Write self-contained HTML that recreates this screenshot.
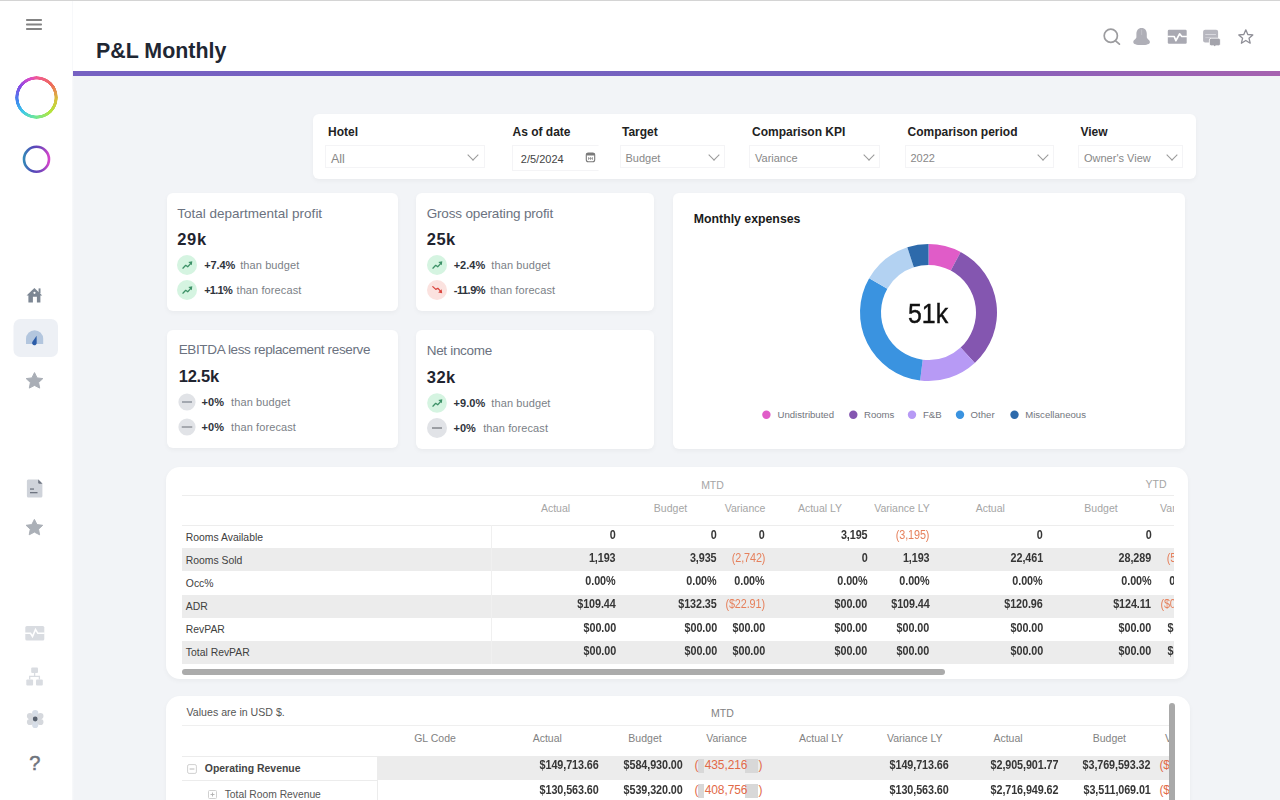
<!DOCTYPE html>
<html><head><meta charset="utf-8">
<style>
*{box-sizing:border-box;margin:0;padding:0}
html,body{width:1280px;height:800px;overflow:hidden;background:#f2f4f7;font-family:"Liberation Sans",sans-serif;color:#222}
.abs{position:absolute}
#topline{position:absolute;left:0;top:0;width:1280px;height:1px;background:#d4d4d4}
#side{position:absolute;left:0;top:1px;width:74px;height:799px;background:linear-gradient(90deg,#fff 71.5px,#f7f8fa 72.5px,#f2f4f7 74px)}
#hdr{position:absolute;left:73px;top:1px;width:1207px;height:70px;background:#fff}
#bar{position:absolute;left:73px;top:71px;width:1207px;height:5px;background:linear-gradient(90deg,#7661c2 0%,#7562bf 60%,#8a61ba 78%,#a662b0 100%)}
.card{position:absolute;background:#fff;border-radius:6px;box-shadow:0 2px 5px rgba(0,0,0,0.04)}
.t{position:absolute;white-space:nowrap;line-height:1}

.fl{font-size:12px;font-weight:bold;color:#222;margin-top:1.5px}
.sel{position:absolute;height:23px;border:1px solid #f4f4f6;background:#fff;margin-top:0.5px}
.sel span{position:absolute;top:7.5px;font-size:11px;color:#888;white-space:nowrap;line-height:1}
.sel i{position:absolute;top:8.5px;width:12px;height:8px}
.sel i:before{content:"";position:absolute;left:2px;top:-3px;width:7px;height:7px;border-right:1.1px solid #999;border-bottom:1.1px solid #999;transform:rotate(45deg)}

.kt{font-size:13.5px;color:#6b7280}
.kv{font-size:16.5px;font-weight:bold;color:#1f2430}
.kp{font-size:11px;font-weight:bold;color:#2e333b;margin-top:1px}
.ks{font-size:11px;color:#7b7f87;letter-spacing:0.1px;margin-top:1px}
.lg{font-size:9.6px;color:#72757d;top:410.37px}

.th1{color:#a5a5a5}
.th2{color:#828282}
#clip1 .nv.red{color:#e6805c}
.tl1{color:#404040}
.nv{font-weight:bold;color:#363636;letter-spacing:-0.1px}
.nv.red{font-weight:normal;color:#e26a48}
#clip1{position:absolute;left:0;top:0;width:1280px;height:800px;clip-path:inset(0 106px 0 0)}
#clip2{position:absolute;left:0;top:0;width:1280px;height:800px;clip-path:inset(0 111px 0 0)}
</style></head><body>
<div id="topline"></div>
<div id="side"></div>
<div id="hdr"></div>
<div id="bar"></div>
<!-- sidebar icons -->
<svg class="abs" style="left:0;top:0" width="72" height="800" viewBox="0 0 72 800">
  <defs>
    <linearGradient id="g2" x1="0" y1="0" x2="1" y2="0">
      <stop offset="0" stop-color="#3486b8"/><stop offset="0.35" stop-color="#5248b8"/><stop offset="0.7" stop-color="#7a46bc"/><stop offset="1" stop-color="#d444cc"/>
    </linearGradient>
  </defs>
  <g fill="#838383">
    <rect x="26" y="19" width="16" height="2" rx="0.8"/>
    <rect x="26" y="23.5" width="16" height="2" rx="0.8"/>
    <rect x="26" y="28" width="16" height="2" rx="0.8"/>
  </g>
  
  <circle cx="36.5" cy="159.3" r="12.5" fill="none" stroke="url(#g2)" stroke-width="2.6"/>
  <!-- home -->
  <g fill="#7d8794">
    <path d="M26.6 295.6 L34.4 288 L42.2 295.6 Z"/>
    <rect x="38.6" y="288.4" width="1.9" height="5"/>
    <path d="M28.4 294.5 H40.4 V302.5 H36.9 V296.8 H32.9 V302.5 H28.4 Z"/>
  </g>
  <circle cx="34.5" cy="292.8" r="1.1" fill="#fff"/>
  <rect x="13.5" y="319" width="44.5" height="38" rx="7" fill="#edf0f5"/>
  <path d="M26 344 V338.8 A8.6 8.6 0 0 1 43.2 338.8 V344 Z" fill="#b3c6de"/>
  <path d="M36.6 335.8 L36.7 342.9 A2.3 2.3 0 1 1 32.3 342 Z" fill="#2b5ca8"/>
  <!-- star -->
  <path d="M34.5 372.6 L37.1 377.9 L42.8 378.6 L38.6 382.5 L39.7 388.1 L34.5 385.4 L29.3 388.1 L30.4 382.5 L26.2 378.6 L31.9 377.9 Z" fill="#a9aeb6" stroke="#a9aeb6" stroke-width="1" stroke-linejoin="round"/>
  <!-- doc -->
  <path d="M28.2 479.5 H38.6 L42.4 483.3 V496 A1.5 1.5 0 0 1 40.9 497.5 H28.4 A1.5 1.5 0 0 1 26.9 496 V481 A1.5 1.5 0 0 1 28.2 479.5 Z" fill="#cfd3da"/>
  <path d="M38.2 479.5 L42.4 483.7 H39.5 A1.3 1.3 0 0 1 38.2 482.4 Z" fill="#6e7480"/>
  <rect x="30" y="488.4" width="4" height="1.3" fill="#6e7480"/>
  <rect x="30" y="492" width="7.5" height="1.3" fill="#6e7480"/>
  <path d="M34.4 519.4 L37 524.6 L42.7 525.3 L38.5 529.2 L39.6 534.8 L34.4 532.1 L29.2 534.8 L30.3 529.2 L26.1 525.3 L31.8 524.6 Z" fill="#abb0b7" stroke="#abb0b7" stroke-width="1" stroke-linejoin="round"/>
  <!-- activity -->
  <rect x="25.3" y="626" width="19" height="14.5" rx="1.5" fill="#d9dce1"/>
  <path d="M25 633.3 H30.5 L32.5 636.5 L35.5 629.5 L37.8 633.3 H44.6" fill="none" stroke="#fff" stroke-width="1.6"/>
  <!-- sitemap -->
  <g fill="#d9dce1">
    <rect x="31.2" y="667.4" width="6.8" height="5.6" rx="1"/>
    <rect x="26.3" y="679.6" width="6.8" height="5.8" rx="1"/>
    <rect x="36" y="679.6" width="6.8" height="5.8" rx="1"/>
  </g>
  <path d="M34.6 673 V676.3 M29.7 679.6 V676.3 H39.4 V679.6" fill="none" stroke="#d9dce1" stroke-width="1.3"/>
  <!-- gear -->
  <g transform="translate(35.2 719)">
    <circle r="6" fill="#d6dbe2"/><circle cx="0.00" cy="6.00" r="3.1" fill="#d6dde7"/><circle cx="-5.20" cy="3.00" r="3.1" fill="#d5d8dd"/><circle cx="-5.20" cy="-3.00" r="3.1" fill="#d5d8dd"/><circle cx="-0.00" cy="-6.00" r="3.1" fill="#d6dde7"/><circle cx="5.20" cy="-3.00" r="3.1" fill="#d5d8dd"/><circle cx="5.20" cy="3.00" r="3.1" fill="#d5d8dd"/>
    <circle r="2.4" fill="#59626f"/>
  </g>
</svg>
<div class="abs" style="left:15px;top:76px;width:43px;height:43px;border-radius:50%;background:conic-gradient(from 0deg,#f05a96,#ee6a5a 50deg,#d8c03c 95deg,#b4e43c 135deg,#6ee69a 185deg,#3ec8ea 225deg,#3f86ee 260deg,#8a48e4 305deg,#d84ac8 340deg,#f05a96);-webkit-mask:radial-gradient(circle,transparent 17.8px,#000 18.2px,#000 21.1px,transparent 21.5px);mask:radial-gradient(circle,transparent 17.8px,#000 18.2px,#000 21.1px,transparent 21.5px)"></div>

<div class="t" style="left:29.3px;top:752.5px;font-size:20px;color:#6f747d;-webkit-text-stroke:0.5px #6f747d">?</div>

<!-- header icons -->
<svg class="abs" style="left:1095px;top:20px" width="175" height="35" viewBox="1095 20 175 35">
  <circle cx="1110.8" cy="35.8" r="6.6" fill="none" stroke="#9c9c9f" stroke-width="1.7"/>
  <path d="M1115.6 40.9 L1119.4 44.1" stroke="#9c9c9f" stroke-width="1.8" stroke-linecap="round"/>
  <path d="M1141.6 27.9 C1138 27.9 1136.4 30.6 1136.4 34 V37.2 C1136.4 38.8 1133.3 39.8 1133.3 42 C1133.3 44.2 1136.3 45.1 1141.6 45.1 C1146.9 45.1 1149.9 44.2 1149.9 42 C1149.9 39.8 1146.8 38.8 1146.8 37.2 V34 C1146.8 30.6 1145.2 27.9 1141.6 27.9 Z" fill="#afafb7"/>
  <path d="M1141.6 29.5 V35" stroke="#c4c4ca" stroke-width="0.8"/>
  <rect x="1167.8" y="29.8" width="18.9" height="13.9" rx="1.2" fill="#a9a9b2"/>
  <path d="M1167.3 36.5 H1174.2 L1175.9 40.6 L1179.6 33.8 L1181.8 36.5 H1187.2" fill="none" stroke="#fff" stroke-width="1.7" stroke-linejoin="round"/>
  <rect x="1203.1" y="29.8" width="15" height="12.6" rx="2" fill="#b7b7bf"/>
  <rect x="1205.3" y="34" width="10.6" height="1" fill="#d8d8de"/>
  <rect x="1205.3" y="37.2" width="5.5" height="0.9" fill="#cfcfd5"/>
  <path d="M1211.2 38.2 H1218.6 A1.8 1.8 0 0 1 1220.4 40 V44 A1.8 1.8 0 0 1 1218.6 45.8 H1216 L1214.4 46.6 L1213.8 45.8 H1211.2 A1.8 1.8 0 0 1 1209.4 44 V40 A1.8 1.8 0 0 1 1211.2 38.2 Z" fill="#a3a3ab" stroke="#fff" stroke-width="0.8"/>
  <path d="M1245.8 29.8 L1247.8 34.5 L1252.8 34.9 L1249 38.2 L1250.2 43.2 L1245.8 40.5 L1241.4 43.2 L1242.6 38.2 L1238.8 34.9 L1243.8 34.5 Z" fill="none" stroke="#8e8e96" stroke-width="1.3" stroke-linejoin="round"/>
</svg>

<div class="t" style="left:96px;top:41px;font-size:21.4px;font-weight:bold;color:#1f2733">P&amp;L Monthly</div>

<!-- filter bar -->
<div class="card" style="left:313px;top:114px;width:883px;height:65px"></div>
<!-- filters -->
<div class="t fl" style="left:328px;top:124px">Hotel</div>
<div class="sel" style="left:325px;top:144px;width:160px"><span style="left:5px;font-size:12.5px;top:7px">All</span><i style="left:141px"></i></div>
<div class="t fl" style="left:512.5px;top:124px">As of date</div>
<div class="sel" style="left:512px;top:144px;width:87px;height:26px;border-right-color:transparent"><span style="left:7.8px;color:#444;top:8px">2/5/2024</span></div>
<svg class="abs" style="left:585px;top:151.5px" width="11" height="11" viewBox="0 0 11 11"><rect x="1.3" y="1.1" width="8.4" height="8.6" rx="2" fill="none" stroke="#7a7a7a" stroke-width="1.1"/><rect x="1.3" y="1.1" width="8.4" height="2.3" rx="1" fill="#7a7a7a"/><path d="M3.6 5 V8 M5.5 5 V8 M7.4 5 V8 M3.2 6.4 H7.8" stroke="#8a8a8a" stroke-width="0.7"/></svg>
<div class="t fl" style="left:622px;top:124px">Target</div>
<div class="sel" style="left:619.5px;top:144px;width:105px"><span style="left:5px">Budget</span><i style="left:87px"></i></div>
<div class="t fl" style="left:752px;top:124px">Comparison KPI</div>
<div class="sel" style="left:749px;top:144px;width:131px"><span style="left:5px">Variance</span><i style="left:113px"></i></div>
<div class="t fl" style="left:907.5px;top:124px">Comparison period</div>
<div class="sel" style="left:904.5px;top:144px;width:149px"><span style="left:5px">2022</span><i style="left:131px"></i></div>
<div class="t fl" style="left:1080.5px;top:124px">View</div>
<div class="sel" style="left:1078px;top:144px;width:105px"><span style="left:5px">Owner's View</span><i style="left:87px"></i></div>


<!-- KPI cards -->
<div class="card" style="left:167px;top:193px;width:231px;height:118px"></div>
<div class="card" style="left:416px;top:193px;width:238px;height:118px"></div>
<div class="card" style="left:167px;top:330px;width:231px;height:118px"></div>
<div class="card" style="left:416px;top:330px;width:238px;height:119px"></div>

<div class="t kt" style="left:177.3px;top:206.57px;letter-spacing:0px">Total departmental profit</div>
<div class="t kv" style="left:177.3px;top:231.03px;letter-spacing:0.62px">29k</div>
<svg class="abs" style="left:177.3px;top:255.3px" width="20" height="20" viewBox="0 0 20 20"><circle cx="10" cy="10" r="10.0" fill="#d5f4e1"/><path d="M5.9 13.2 L8.7 10.3 L10.7 11.8 L13.9 8.4" fill="none" stroke="#3d9167" stroke-width="1.25" stroke-linecap="round" stroke-linejoin="round"/><path d="M11.3 6.9 L15.3 6.2 L14.8 10.3 Z" fill="#3d9167"/></svg>
<div class="t kp" style="left:204.2px;top:259.49px;letter-spacing:-0.1px">+7.4%</div>
<div class="t ks" style="left:240.2px;top:259.49px">than budget</div>
<svg class="abs" style="left:177.3px;top:280.2px" width="20" height="20" viewBox="0 0 20 20"><circle cx="10" cy="10" r="10.0" fill="#d5f4e1"/><path d="M5.9 13.2 L8.7 10.3 L10.7 11.8 L13.9 8.4" fill="none" stroke="#3d9167" stroke-width="1.25" stroke-linecap="round" stroke-linejoin="round"/><path d="M11.3 6.9 L15.3 6.2 L14.8 10.3 Z" fill="#3d9167"/></svg>
<div class="t kp" style="left:204.2px;top:284.49px;letter-spacing:-0.74px">+1.1%</div>
<div class="t ks" style="left:236.5px;top:284.49px">than forecast</div>
<div class="t kt" style="left:426.7px;top:206.57px;letter-spacing:-0.16px">Gross operating profit</div>
<div class="t kv" style="left:426.7px;top:231.03px;letter-spacing:0.52px">25k</div>
<svg class="abs" style="left:427.1px;top:255.3px" width="20" height="20" viewBox="0 0 20 20"><circle cx="10" cy="10" r="10.0" fill="#d5f4e1"/><path d="M5.9 13.2 L8.7 10.3 L10.7 11.8 L13.9 8.4" fill="none" stroke="#3d9167" stroke-width="1.25" stroke-linecap="round" stroke-linejoin="round"/><path d="M11.3 6.9 L15.3 6.2 L14.8 10.3 Z" fill="#3d9167"/></svg>
<div class="t kp" style="left:453.7px;top:259.49px;letter-spacing:0px">+2.4%</div>
<div class="t ks" style="left:491.3px;top:259.49px">than budget</div>
<svg class="abs" style="left:427.1px;top:280.2px" width="20" height="20" viewBox="0 0 20 20"><circle cx="10" cy="10" r="10.0" fill="#fbe2df"/><path d="M5.8 6.6 L8.8 9.4 L10.8 8.3 L13.8 11.4" fill="none" stroke="#d9443d" stroke-width="1.25" stroke-linecap="round" stroke-linejoin="round"/><path d="M11.2 12.4 L15.2 13.2 L14.6 9.3 Z" fill="#d9443d"/></svg>
<div class="t kp" style="left:453.7px;top:284.49px;letter-spacing:-0.46px">-11.9%</div>
<div class="t ks" style="left:490.3px;top:284.49px">than forecast</div>
<div class="t kt" style="left:178.7px;top:343.17px;letter-spacing:-0.36px">EBITDA less replacement reserve</div>
<div class="t kv" style="left:178.7px;top:367.63px;letter-spacing:-0.22px">12.5k</div>
<svg class="abs" style="left:176.8px;top:392px" width="20" height="20" viewBox="0 0 20 20"><circle cx="10" cy="10" r="8.6" fill="#e1e3e7"/><path d="M5.0 10 H15.0" stroke="#a3a8b0" stroke-width="2"/></svg>
<div class="t kp" style="left:201.6px;top:396.39px;letter-spacing:0.03px">+0%</div>
<div class="t ks" style="left:231.1px;top:396.39px">than budget</div>
<svg class="abs" style="left:176.5px;top:417.1px" width="20" height="20" viewBox="0 0 20 20"><circle cx="10" cy="10" r="8.6" fill="#e1e3e7"/><path d="M4.75 10 H15.25" stroke="#6a6e76" stroke-width="1"/></svg>
<div class="t kp" style="left:201.6px;top:421.29px;letter-spacing:0.03px">+0%</div>
<div class="t ks" style="left:231.1px;top:421.29px">than forecast</div>
<div class="t kt" style="left:426.7px;top:344.17px;letter-spacing:-0.31px">Net income</div>
<div class="t kv" style="left:426.7px;top:368.53px;letter-spacing:0.52px">32k</div>
<svg class="abs" style="left:426.9px;top:392.6px" width="20" height="20" viewBox="0 0 20 20"><circle cx="10" cy="10" r="9.8" fill="#d5f4e1"/><path d="M5.9 13.2 L8.7 10.3 L10.7 11.8 L13.9 8.4" fill="none" stroke="#3d9167" stroke-width="1.25" stroke-linecap="round" stroke-linejoin="round"/><path d="M11.3 6.9 L15.3 6.2 L14.8 10.3 Z" fill="#3d9167"/></svg>
<div class="t kp" style="left:453.5px;top:397.19px;letter-spacing:0.06px">+9.0%</div>
<div class="t ks" style="left:491.3px;top:397.19px">than budget</div>
<svg class="abs" style="left:426.7px;top:417.8px" width="20" height="20" viewBox="0 0 20 20"><circle cx="10" cy="10" r="10.0" fill="#e1e3e7"/><path d="M5.0 10 H15.0" stroke="#55595f" stroke-width="1"/></svg>
<div class="t kp" style="left:453.5px;top:421.89px;letter-spacing:0.03px">+0%</div>
<div class="t ks" style="left:483.2px;top:421.89px">than forecast</div>

<!-- donut card -->
<div class="card" style="left:673px;top:193px;width:512px;height:256px"></div>
<div class="t" style="left:693.8px;top:212.89px;font-size:12.3px;font-weight:bold;color:#1a1a1a">Monthly expenses</div>
<svg class="abs" style="left:673px;top:193px" width="512" height="256" viewBox="673 193 512 256"><path d="M928.50 244.00 A68.5 68.5 0 0 1 960.66 252.02 L950.80 270.56 A47.5 47.5 0 0 0 928.50 265.00 Z" fill="#e05cc8"/><path d="M960.66 252.02 A68.5 68.5 0 0 1 974.78 363.00 L960.59 347.52 A47.5 47.5 0 0 0 950.80 270.56 Z" fill="#8456b0"/><path d="M974.78 363.00 A68.5 68.5 0 0 1 920.15 380.49 L922.71 359.65 A47.5 47.5 0 0 0 960.59 347.52 Z" fill="#b79af5"/><path d="M920.15 380.49 A68.5 68.5 0 0 1 869.18 278.25 L887.36 288.75 A47.5 47.5 0 0 0 922.71 359.65 Z" fill="#3a93e0"/><path d="M869.18 278.25 A68.5 68.5 0 0 1 907.33 247.35 L913.82 267.32 A47.5 47.5 0 0 0 887.36 288.75 Z" fill="#b3d2f2"/><path d="M907.33 247.35 A68.5 68.5 0 0 1 928.50 244.00 L928.50 265.00 A47.5 47.5 0 0 0 913.82 267.32 Z" fill="#2d6aab"/>
<circle cx="766.4" cy="414.7" r="4.2" fill="#e05cc8"/>
<circle cx="853.3" cy="414.7" r="4.2" fill="#8456b0"/>
<circle cx="912" cy="414.7" r="4.2" fill="#b79af5"/>
<circle cx="960" cy="414.7" r="4.2" fill="#3a93e0"/>
<circle cx="1014.5" cy="414.7" r="4.2" fill="#2d6aab"/>
</svg>
<div class="t" style="left:908.3px;top:299.9px;font-size:28px;color:#111;transform:scaleX(0.89);transform-origin:0 0;-webkit-text-stroke:0.45px #111">51k</div>
<div class="t lg" style="left:777.5px">Undistributed</div>
<div class="t lg" style="left:864px">Rooms</div>
<div class="t lg" style="left:923px">F&amp;B</div>
<div class="t lg" style="left:970.6px">Other</div>
<div class="t lg" style="left:1025.2px">Miscellaneous</div>


<!-- table 1 -->
<div class="card" style="left:166px;top:467px;width:1022px;height:212px;border-radius:14px"></div><!-- table1 --><div class="abs" style="left:182px;top:494.5px;width:992px;height:1px;background:#ededed"></div><div class="abs" style="left:182px;top:524.5px;width:992px;height:1px;background:#ededed"></div><div class="abs" style="left:182px;top:548.17px;width:992px;height:23.17px;background:#ececec"></div><div class="abs" style="left:182px;top:594.51px;width:992px;height:23.17px;background:#ececec"></div><div class="abs" style="left:182px;top:640.85px;width:992px;height:23.17px;background:#ececec"></div><div class="abs" style="left:491px;top:525px;width:1px;height:139px;background:#f0f0f0"></div><div class="abs" style="left:182px;top:669px;width:763px;height:5.5px;border-radius:3px;background:#ababab"></div><div id="clip1"><div class="t th1" style="left:612.50px;width:200px;text-align:center;top:479.71px;font-size:10.5px;">MTD</div><div class="t th1" style="right:113.50px;top:479.31px;font-size:10.5px;">YTD</div><div class="t th1" style="left:455.50px;width:200px;text-align:center;top:503.31px;font-size:10.5px;">Actual</div><div class="t th1" style="left:570.50px;width:200px;text-align:center;top:503.31px;font-size:10.5px;">Budget</div><div class="t th1" style="left:645.00px;width:200px;text-align:center;top:503.31px;font-size:10.5px;">Variance</div><div class="t th1" style="left:720.00px;width:200px;text-align:center;top:503.31px;font-size:10.5px;">Actual LY</div><div class="t th1" style="left:802.00px;width:200px;text-align:center;top:503.31px;font-size:10.5px;">Variance LY</div><div class="t th1" style="left:890.30px;width:200px;text-align:center;top:503.31px;font-size:10.5px;">Actual</div><div class="t th1" style="left:1001.00px;width:200px;text-align:center;top:503.31px;font-size:10.5px;">Budget</div><div class="t th1" style="left:1160.1px;top:503.31px;font-size:10.5px;">Var</div><div class="t tl1" style="left:185.8px;top:532.50px;font-size:10.4px;">Rooms Available</div><div class="t nv" style="right:664.00px;top:528.94px;font-size:12px;transform:scaleX(0.9);transform-origin:100% 0;">0</div><div class="t nv" style="right:563.00px;top:528.94px;font-size:12px;transform:scaleX(0.9);transform-origin:100% 0;">0</div><div class="t nv" style="right:515.00px;top:528.94px;font-size:12px;transform:scaleX(0.9);transform-origin:100% 0;">0</div><div class="t nv" style="right:412.60px;top:528.94px;font-size:12px;transform:scaleX(0.9);transform-origin:100% 0;">3,195</div><div class="t nv red" style="right:350.80px;top:528.94px;font-size:12px;transform:scaleX(0.9);transform-origin:100% 0;">(3,195)</div><div class="t nv" style="right:237.30px;top:528.94px;font-size:12px;transform:scaleX(0.9);transform-origin:100% 0;">0</div><div class="t nv" style="right:128.60px;top:528.94px;font-size:12px;transform:scaleX(0.9);transform-origin:100% 0;">0</div><div class="t nv" style="right:80.00px;top:528.94px;font-size:12px;transform:scaleX(0.9);transform-origin:100% 0;">0</div><div class="t tl1" style="left:185.8px;top:555.67px;font-size:10.4px;">Rooms Sold</div><div class="t nv" style="right:664.00px;top:552.11px;font-size:12px;transform:scaleX(0.9);transform-origin:100% 0;">1,193</div><div class="t nv" style="right:563.00px;top:552.11px;font-size:12px;transform:scaleX(0.9);transform-origin:100% 0;">3,935</div><div class="t nv red" style="right:515.00px;top:552.11px;font-size:12px;transform:scaleX(0.9);transform-origin:100% 0;">(2,742)</div><div class="t nv" style="right:412.60px;top:552.11px;font-size:12px;transform:scaleX(0.9);transform-origin:100% 0;">0</div><div class="t nv" style="right:350.80px;top:552.11px;font-size:12px;transform:scaleX(0.9);transform-origin:100% 0;">1,193</div><div class="t nv" style="right:237.30px;top:552.11px;font-size:12px;transform:scaleX(0.9);transform-origin:100% 0;">22,461</div><div class="t nv" style="right:128.60px;top:552.11px;font-size:12px;transform:scaleX(0.9);transform-origin:100% 0;">28,289</div><div class="t nv red" style="right:80.00px;top:552.11px;font-size:12px;transform:scaleX(0.9);transform-origin:100% 0;">(5,828)</div><div class="t tl1" style="left:185.8px;top:578.84px;font-size:10.4px;">Occ%</div><div class="t nv" style="right:664.00px;top:575.28px;font-size:12px;transform:scaleX(0.9);transform-origin:100% 0;">0.00%</div><div class="t nv" style="right:563.00px;top:575.28px;font-size:12px;transform:scaleX(0.9);transform-origin:100% 0;">0.00%</div><div class="t nv" style="right:515.00px;top:575.28px;font-size:12px;transform:scaleX(0.9);transform-origin:100% 0;">0.00%</div><div class="t nv" style="right:412.60px;top:575.28px;font-size:12px;transform:scaleX(0.9);transform-origin:100% 0;">0.00%</div><div class="t nv" style="right:350.80px;top:575.28px;font-size:12px;transform:scaleX(0.9);transform-origin:100% 0;">0.00%</div><div class="t nv" style="right:237.30px;top:575.28px;font-size:12px;transform:scaleX(0.9);transform-origin:100% 0;">0.00%</div><div class="t nv" style="right:128.60px;top:575.28px;font-size:12px;transform:scaleX(0.9);transform-origin:100% 0;">0.00%</div><div class="t nv" style="right:80.00px;top:575.28px;font-size:12px;transform:scaleX(0.9);transform-origin:100% 0;">0.00%</div><div class="t tl1" style="left:185.8px;top:602.01px;font-size:10.4px;">ADR</div><div class="t nv" style="right:664.00px;top:598.45px;font-size:12px;transform:scaleX(0.9);transform-origin:100% 0;">$109.44</div><div class="t nv" style="right:563.00px;top:598.45px;font-size:12px;transform:scaleX(0.9);transform-origin:100% 0;">$132.35</div><div class="t nv red" style="right:515.00px;top:598.45px;font-size:12px;transform:scaleX(0.9);transform-origin:100% 0;">($22.91)</div><div class="t nv" style="right:412.60px;top:598.45px;font-size:12px;transform:scaleX(0.9);transform-origin:100% 0;">$00.00</div><div class="t nv" style="right:350.80px;top:598.45px;font-size:12px;transform:scaleX(0.9);transform-origin:100% 0;">$109.44</div><div class="t nv" style="right:237.30px;top:598.45px;font-size:12px;transform:scaleX(0.9);transform-origin:100% 0;">$120.96</div><div class="t nv" style="right:128.60px;top:598.45px;font-size:12px;transform:scaleX(0.9);transform-origin:100% 0;">$124.11</div><div class="t nv red" style="right:80.00px;top:598.45px;font-size:12px;transform:scaleX(0.9);transform-origin:100% 0;">($03.15)</div><div class="t tl1" style="left:185.8px;top:625.18px;font-size:10.4px;">RevPAR</div><div class="t nv" style="right:664.00px;top:621.62px;font-size:12px;transform:scaleX(0.9);transform-origin:100% 0;">$00.00</div><div class="t nv" style="right:563.00px;top:621.62px;font-size:12px;transform:scaleX(0.9);transform-origin:100% 0;">$00.00</div><div class="t nv" style="right:515.00px;top:621.62px;font-size:12px;transform:scaleX(0.9);transform-origin:100% 0;">$00.00</div><div class="t nv" style="right:412.60px;top:621.62px;font-size:12px;transform:scaleX(0.9);transform-origin:100% 0;">$00.00</div><div class="t nv" style="right:350.80px;top:621.62px;font-size:12px;transform:scaleX(0.9);transform-origin:100% 0;">$00.00</div><div class="t nv" style="right:237.30px;top:621.62px;font-size:12px;transform:scaleX(0.9);transform-origin:100% 0;">$00.00</div><div class="t nv" style="right:128.60px;top:621.62px;font-size:12px;transform:scaleX(0.9);transform-origin:100% 0;">$00.00</div><div class="t nv" style="right:80.00px;top:621.62px;font-size:12px;transform:scaleX(0.9);transform-origin:100% 0;">$00.00</div><div class="t tl1" style="left:185.8px;top:648.35px;font-size:10.4px;">Total RevPAR</div><div class="t nv" style="right:664.00px;top:644.79px;font-size:12px;transform:scaleX(0.9);transform-origin:100% 0;">$00.00</div><div class="t nv" style="right:563.00px;top:644.79px;font-size:12px;transform:scaleX(0.9);transform-origin:100% 0;">$00.00</div><div class="t nv" style="right:515.00px;top:644.79px;font-size:12px;transform:scaleX(0.9);transform-origin:100% 0;">$00.00</div><div class="t nv" style="right:412.60px;top:644.79px;font-size:12px;transform:scaleX(0.9);transform-origin:100% 0;">$00.00</div><div class="t nv" style="right:350.80px;top:644.79px;font-size:12px;transform:scaleX(0.9);transform-origin:100% 0;">$00.00</div><div class="t nv" style="right:237.30px;top:644.79px;font-size:12px;transform:scaleX(0.9);transform-origin:100% 0;">$00.00</div><div class="t nv" style="right:128.60px;top:644.79px;font-size:12px;transform:scaleX(0.9);transform-origin:100% 0;">$00.00</div><div class="t nv" style="right:80.00px;top:644.79px;font-size:12px;transform:scaleX(0.9);transform-origin:100% 0;">$00.00</div></div>
<!-- table 2 -->
<div class="card" style="left:166px;top:696px;width:1024px;height:120px;border-radius:14px"></div>
<!-- table2 --><div class="abs" style="left:182px;top:724.5px;width:987px;height:1px;background:#efefef"></div><div class="abs" style="left:182px;top:756px;width:987px;height:1px;background:#ececec"></div><div class="abs" style="left:377px;top:756.5px;width:792px;height:23.5px;background:#ececec"></div><div class="abs" style="left:182px;top:780px;width:195px;height:1px;background:#ececec"></div><div class="abs" style="left:377px;top:780px;width:1px;height:20px;background:#ececec"></div><div class="abs" style="left:698.4px;top:759.4px;width:5.4px;height:14px;background:#d8d8d8"></div><div class="abs" style="left:745.3px;top:759.4px;width:12.5px;height:14px;background:#d8d8d8"></div><div class="abs" style="left:698.4px;top:784.4px;width:5.4px;height:14px;background:#d8d8d8"></div><div class="abs" style="left:745.3px;top:784.4px;width:12.5px;height:14px;background:#d8d8d8"></div><div class="abs" style="left:1169.3px;top:703px;width:5.6px;height:110px;border-radius:3px;background:#a9a9a9"></div><div id="clip2"><div class="t tl2" style="left:186.6px;top:707.03px;font-size:10.6px;color:#555">Values are in USD $.</div><div class="t th2" style="left:622.40px;width:200px;text-align:center;top:708.31px;font-size:10.5px;">MTD</div><div class="t th2" style="left:335.00px;width:200px;text-align:center;top:733.31px;font-size:10.5px;">GL Code</div><div class="t th2" style="left:447.30px;width:200px;text-align:center;top:733.31px;font-size:10.5px;">Actual</div><div class="t th2" style="left:545.00px;width:200px;text-align:center;top:733.31px;font-size:10.5px;">Budget</div><div class="t th2" style="left:626.60px;width:200px;text-align:center;top:733.31px;font-size:10.5px;">Variance</div><div class="t th2" style="left:721.20px;width:200px;text-align:center;top:733.31px;font-size:10.5px;">Actual LY</div><div class="t th2" style="left:814.80px;width:200px;text-align:center;top:733.31px;font-size:10.5px;">Variance LY</div><div class="t th2" style="left:908.00px;width:200px;text-align:center;top:733.31px;font-size:10.5px;">Actual</div><div class="t th2" style="left:1009.40px;width:200px;text-align:center;top:733.31px;font-size:10.5px;">Budget</div><div class="t th2" style="left:1165px;top:733.31px;font-size:10.5px;">V</div><svg class="abs" style="left:187px;top:764px" width="10" height="10" viewBox="0 0 10 10"><rect x="0.6" y="0.6" width="8.8" height="8.8" rx="1.5" fill="none" stroke="#d0d0d0" stroke-width="1"/><path d="M2.6 5 H7.4" stroke="#b8b8b8" stroke-width="1"/></svg><div class="t tl2" style="left:204.8px;top:764.45px;font-size:10.45px;font-weight:bold;color:#454545">Operating Revenue</div><svg class="abs" style="left:207.5px;top:789.5px" width="9" height="9" viewBox="0 0 9 9"><rect x="0.5" y="0.5" width="8" height="8" rx="1" fill="none" stroke="#d0d0d0" stroke-width="1"/><path d="M2.5 4.5 H6.5 M4.5 2.5 V6.5" stroke="#b0b0b0" stroke-width="0.9"/></svg><div class="t tl2" style="left:224.7px;top:789.58px;font-size:10.3px;color:#555">Total Room Revenue</div><div class="t nv" style="right:681.25px;top:759.24px;font-size:12px;transform:scaleX(0.9);transform-origin:100% 0;">$149,713.66</div><div class="t nv" style="right:597.20px;top:759.24px;font-size:12px;transform:scaleX(0.9);transform-origin:100% 0;">$584,930.00</div><div class="t nv red" style="left:694.4px;top:759.24px;font-size:12px;font-weight:normaltransform:scaleX(0.9);transform-origin:0 0;">(</div><div class="t nv red" style="left:704.7px;top:759.24px;font-size:12px;font-weight:normaltransform:scaleX(0.86);transform-origin:0 0;">435,216</div><div class="t nv red" style="left:758.5px;top:759.24px;font-size:12px;font-weight:normaltransform:scaleX(0.9);transform-origin:0 0;">)</div><div class="t nv" style="right:331.00px;top:759.24px;font-size:12px;transform:scaleX(0.9);transform-origin:100% 0;">$149,713.66</div><div class="t nv" style="right:221.30px;top:759.24px;font-size:12px;transform:scaleX(0.9);transform-origin:100% 0;">$2,905,901.77</div><div class="t nv" style="right:129.20px;top:759.24px;font-size:12px;transform:scaleX(0.9);transform-origin:100% 0;">$3,769,593.32</div><div class="t nv red" style="left:1159.4px;top:759.24px;font-size:12px;font-weight:normaltransform:scaleX(0.9);transform-origin:0 0;">($</div><div class="t nv" style="right:681.25px;top:784.24px;font-size:12px;transform:scaleX(0.9);transform-origin:100% 0;">$130,563.60</div><div class="t nv" style="right:597.20px;top:784.24px;font-size:12px;transform:scaleX(0.9);transform-origin:100% 0;">$539,320.00</div><div class="t nv red" style="left:694.4px;top:784.24px;font-size:12px;font-weight:normaltransform:scaleX(0.9);transform-origin:0 0;">(</div><div class="t nv red" style="left:704.7px;top:784.24px;font-size:12px;font-weight:normaltransform:scaleX(0.86);transform-origin:0 0;">408,756</div><div class="t nv red" style="left:758.5px;top:784.24px;font-size:12px;font-weight:normaltransform:scaleX(0.9);transform-origin:0 0;">)</div><div class="t nv" style="right:331.00px;top:784.24px;font-size:12px;transform:scaleX(0.9);transform-origin:100% 0;">$130,563.60</div><div class="t nv" style="right:221.30px;top:784.24px;font-size:12px;transform:scaleX(0.9);transform-origin:100% 0;">$2,716,949.62</div><div class="t nv" style="right:129.20px;top:784.24px;font-size:12px;transform:scaleX(0.9);transform-origin:100% 0;">$3,511,069.01</div><div class="t nv red" style="left:1159.4px;top:784.24px;font-size:12px;font-weight:normaltransform:scaleX(0.9);transform-origin:0 0;">($</div></div></body></html>
